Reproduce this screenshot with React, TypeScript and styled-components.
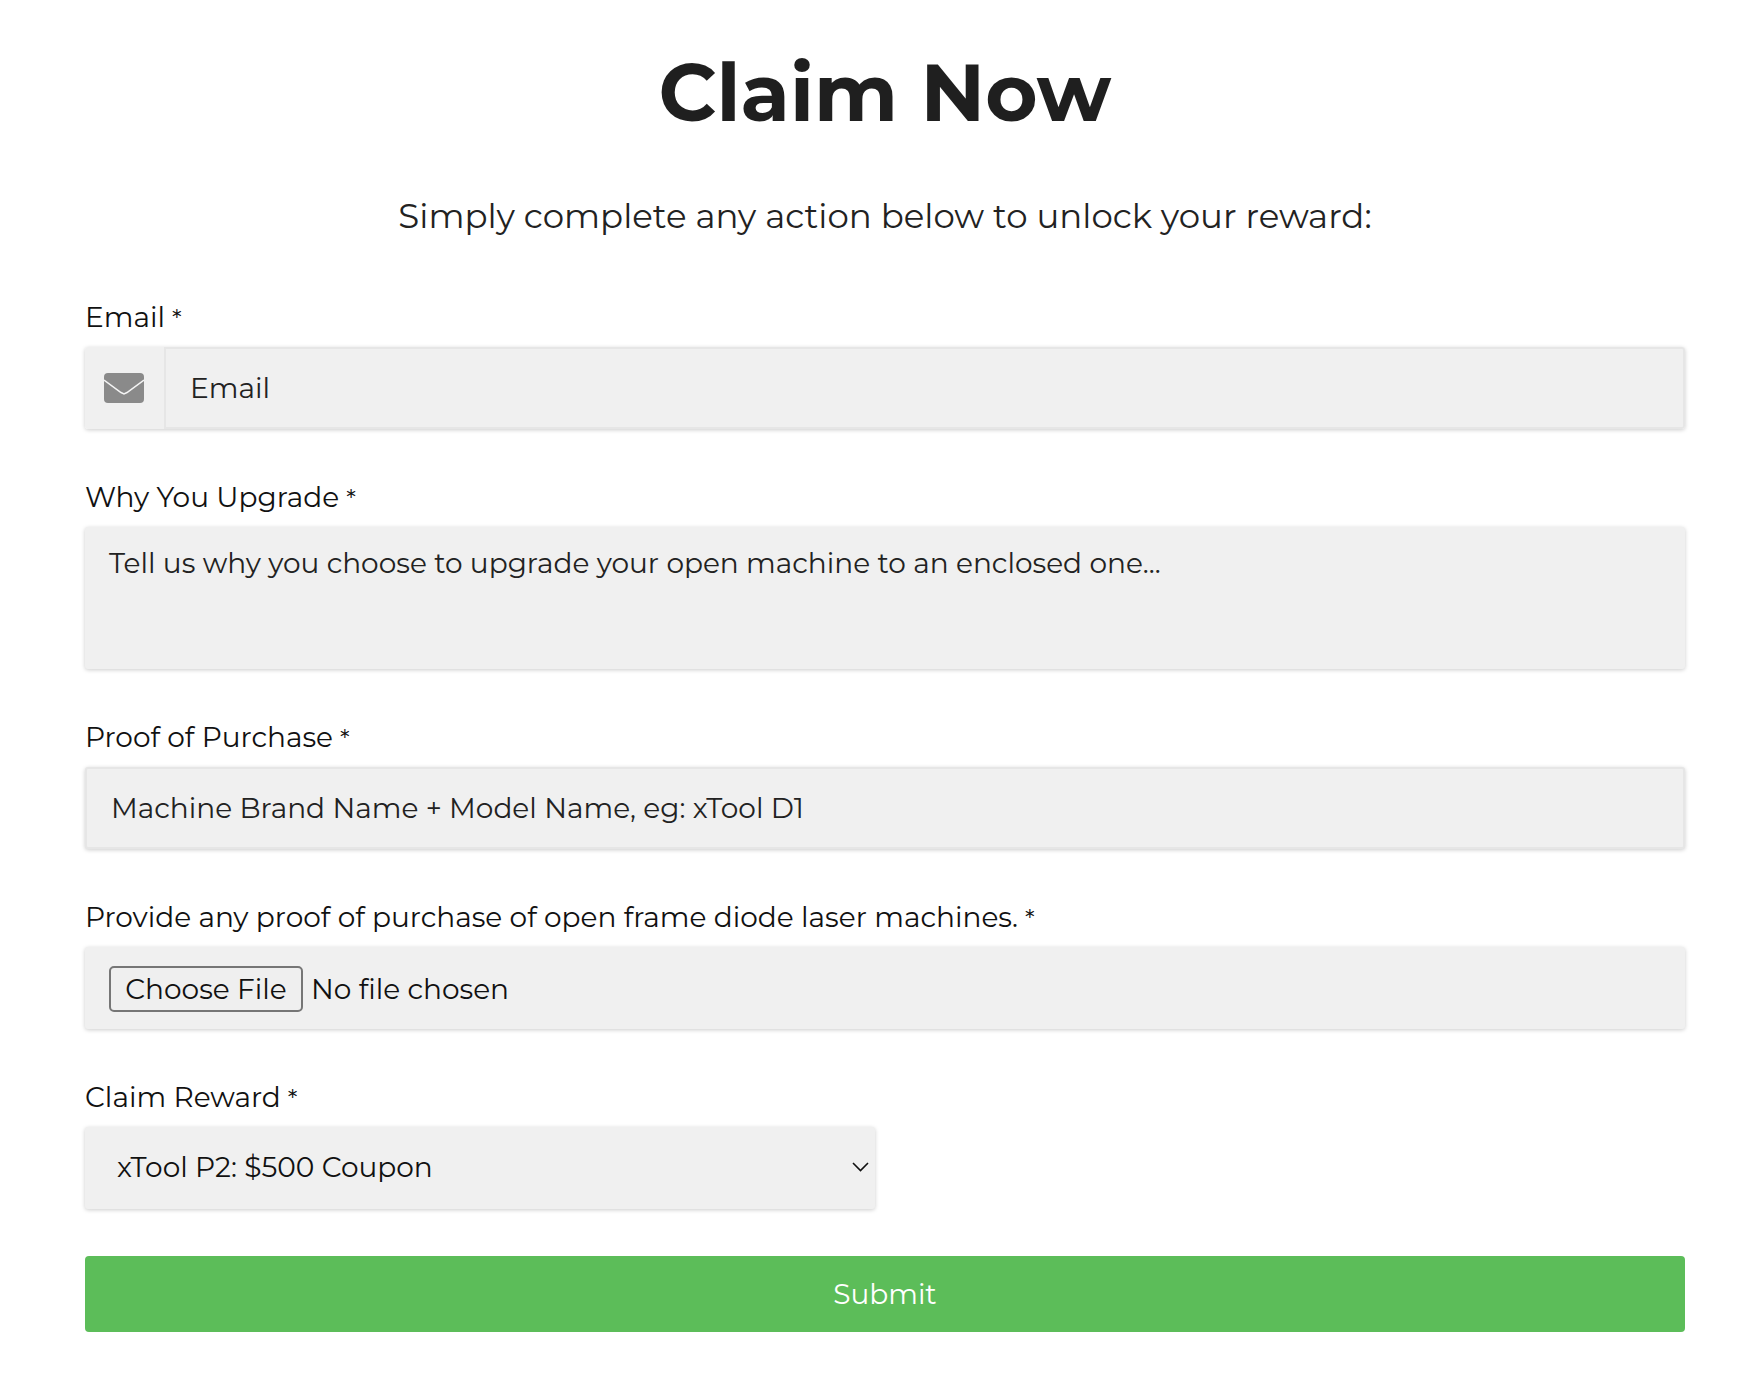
import React from 'react'
import styled, { createGlobalStyle, css } from 'styled-components'

const GlobalStyle = createGlobalStyle`
  html, body { margin: 0; background: #fff; }
  body { font-family: Montserrat, "Open Sans", "Noto Sans", sans-serif; color: #1a1a1a; }
`

const Page = styled.form`
  width: 1600px;
  margin-left: 85px;
  padding-top: 41px;
`

const Title = styled.h1`
  margin: 0;
  font-size: 80px;
  line-height: 104px;
  font-weight: 700;
  text-align: center;
  color: #1f1f1f;
`

const Sub = styled.p`
  margin: 47px 0 0;
  font-size: 34px;
  line-height: 48px;
  text-align: center;
  color: #222;
`

const Label = styled.label<{ $first?: boolean }>`
  display: block;
  margin: ${p => (p.$first ? '59px' : '50px')} 0 12px;
  font-size: 28px;
  line-height: 36px;
  color: #111;
`

const Required = styled.span`
  margin-left: 7px;
  font-size: 25px;
  line-height: 0;
`

const fieldBox = css`
  display: block;
  width: 100%;
  box-sizing: border-box;
  background: #f0f0f0;
  border-radius: 3px;
  box-shadow: 0 1px 4px rgba(0, 0, 0, 0.2);
  font-family: inherit;
  font-size: 28px;
  color: #222;
  outline: none;

  &::placeholder {
    color: #222;
    opacity: 1;
  }
`

const TextInput = styled.input`
  ${fieldBox}
  height: 82px;
  border: 2px solid #e6e6e6;
  padding: 0 24px;
`

const TextArea = styled.textarea`
  ${fieldBox}
  height: 142px;
  border: 0;
  padding: 19px 24px;
  line-height: 34px;
  resize: none;
`

const FileInput = styled.input`
  ${fieldBox}
  height: 82px;
  border: 0;
  padding: 19px 24px;
  color: #111;

  &::file-selector-button {
    height: 46px;
    width: 194px;
    margin-right: 8px;
    padding: 0;
    background: #efefef;
    border: 2px solid #767676;
    border-radius: 5px;
    font: inherit;
    color: #111;
  }
`

const SelectWrap = styled.div`
  position: relative;
  width: 790px;
`

const Select = styled.select`
  ${fieldBox}
  height: 82px;
  border: 0;
  padding: 0 0 2px 32px;
  color: #111;
  appearance: none;
`

const Chevron = styled.svg`
  position: absolute;
  top: 35px;
  right: 6px;
  pointer-events: none;
`

const InputGroup = styled.div`
  display: flex;
  height: 82px;
  border-radius: 3px;
  box-shadow: 0 1px 4px rgba(0, 0, 0, 0.2);
`

const Addon = styled.span`
  display: flex;
  flex: 0 0 79px;
  align-items: center;
  justify-content: center;
  padding-right: 2px;
  box-sizing: border-box;
  background: #f0f0f0;
  border-radius: 3px 0 0 3px;
`

const GroupInput = styled(TextInput)`
  flex: 1;
  box-shadow: none;
  border-radius: 0 3px 3px 0;
`

const Submit = styled.button`
  display: block;
  width: 100%;
  height: 76px;
  margin-top: 47px;
  background: #5cbd59;
  color: #fff;
  border: 0;
  border-radius: 4px;
  font-family: inherit;
  font-size: 28px;
`

const Envelope = () => (
  <svg width="40" height="30" viewBox="0 0 40 30">
    <rect width="40" height="30" rx="4" fill="#8a8a8a" />
    <polyline points="0,7 17,19.5 20,21 23,19.5 40,7" fill="none" stroke="#f4f4f4" strokeWidth="1.5" />
  </svg>
)

export default function App() {
  return (
    <Page>
      <GlobalStyle />
      <Title>Claim Now</Title>
      <Sub>Simply complete any action below to unlock your reward:</Sub>

      <Label $first>Email<Required>*</Required></Label>
      <InputGroup>
        <Addon><Envelope /></Addon>
        <GroupInput placeholder="Email" />
      </InputGroup>

      <Label>Why You Upgrade<Required>*</Required></Label>
      <TextArea placeholder="Tell us why you choose to upgrade your open machine to an enclosed one..." />

      <Label>Proof of Purchase<Required>*</Required></Label>
      <TextInput placeholder="Machine Brand Name + Model Name, eg: xTool D1" />

      <Label>Provide any proof of purchase of open frame diode laser machines.<Required>*</Required></Label>
      <FileInput type="file" />

      <Label>Claim Reward<Required>*</Required></Label>
      <SelectWrap>
        <Select defaultValue="p2">
          <option value="p2">xTool P2: $500 Coupon</option>
        </Select>
        <Chevron width="17" height="10" viewBox="0 0 17 10">
          <polyline points="1,1 8.5,8.5 16,1" fill="none" stroke="#111" strokeWidth="1.6" />
        </Chevron>
      </SelectWrap>

      <Submit type="button">Submit</Submit>
    </Page>
  )
}
